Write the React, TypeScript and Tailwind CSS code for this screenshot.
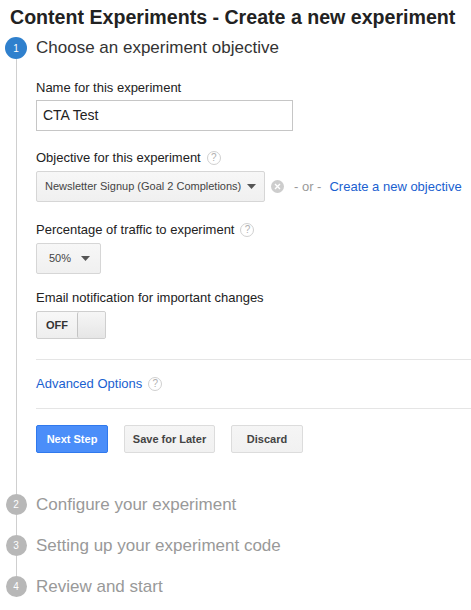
import React from "react";

const font = { fontFamily: '"Liberation Sans", Arial, sans-serif' };

function Help() {
  return (
    <span className="inline-flex h-[14px] w-[14px] items-center justify-center rounded-full border border-[#d0d0d0] text-[10px] leading-none text-[#b0b0b0]">
      ?
    </span>
  );
}

function Caret() {
  return (
    <svg width="9" height="5" viewBox="0 0 9 5" className="shrink-0">
      <path d="M0 0h9L4.5 5z" fill="#555" />
    </svg>
  );
}

function StepMarker({ n, active, line }: { n: number; active?: boolean; line: boolean }) {
  return (
    <div className="flex w-[22px] shrink-0 flex-col items-center">
      <div
        className={
          "flex shrink-0 items-center justify-center rounded-full text-[10px] text-white " +
          (active ? "h-[22px] w-[22px] bg-[#2f80cd]" : "h-[21px] w-[21px] bg-[#b8b8b8]")
        }
      >
        {n}
      </div>
      {line && <div className="w-px flex-1 bg-[#cfcfcf]" />}
    </div>
  );
}

function Label({ children }: { children: React.ReactNode }) {
  return <div className="flex items-center gap-[6px] text-[13px] leading-4 text-[#222]">{children}</div>;
}

export default function App() {
  return (
    <div className="min-h-[610px] w-[471px] overflow-hidden bg-white" style={font}>
      <h1 className="pl-[10px] pt-[5px] text-[19.6px] font-bold leading-6 text-[#222]">
        Content Experiments - Create a new experiment
      </h1>

      <div className="mt-[8px] pl-[5px]">
        {/* Step 1 */}
        <div className="flex gap-[9px]">
          <StepMarker n={1} active line />
          <div className="flex-1 pb-[41px]">
            <div className="text-[17px] leading-[22px] text-[#333]">Choose an experiment objective</div>

            <div className="mt-[21px]">
              <Label>Name for this experiment</Label>
              <div className="mt-[4px] flex h-[31px] w-[257px] items-center border border-[#c6c6c6] px-[6px] text-[14px] text-[#222]">
                CTA Test
              </div>
            </div>

            <div className="mt-[19px]">
              <Label>
                Objective for this experiment <Help />
              </Label>
              <div className="mt-[5px] flex items-center">
                <div className="flex h-[31px] w-[229px] items-center justify-between rounded-[2px] border border-[#d6d6d6] bg-gradient-to-b from-[#f7f7f7] to-[#f0f0f0] pl-[8px] pr-[8px] text-[11px] text-[#444]">
                  <span>Newsletter Signup (Goal 2 Completions)</span>
                  <Caret />
                </div>
                <span className="ml-[6px] inline-flex h-[13px] w-[13px] items-center justify-center rounded-full bg-[#cdcdcd]">
                  <svg width="7" height="7" viewBox="0 0 7 7">
                    <path d="M1 1l5 5M6 1l-5 5" stroke="#fff" strokeWidth="1.4" />
                  </svg>
                </span>
                <span className="ml-[10px] text-[13px] text-[#999]">- or -</span>
                <span className="ml-[8px] text-[13px] text-[#1a5fd0]">Create a new objective</span>
              </div>
            </div>

            <div className="mt-[20px]">
              <Label>
                Percentage of traffic to experiment <Help />
              </Label>
              <div className="mt-[5px] flex h-[31px] w-[65px] items-center justify-between rounded-[2px] border border-[#d6d6d6] bg-gradient-to-b from-[#f7f7f7] to-[#f0f0f0] pl-[12px] pr-[10px] text-[11px] text-[#444]">
                <span>50%</span>
                <Caret />
              </div>
            </div>

            <div className="mt-[16px]">
              <Label>Email notification for important changes</Label>
              <div className="mt-[5px] flex h-[28px] w-[70px] overflow-hidden rounded-[2px] border border-[#cfcfcf] bg-gradient-to-b from-[#f8f8f8] to-[#eeeeee]">
                <div className="flex w-[40px] items-center justify-center text-[11px] font-bold text-[#333]">OFF</div>
                <div className="flex-1 rounded-[2px] border-l border-[#c4c4c4] bg-gradient-to-b from-[#f6f6f6] to-[#e6e6e6]" />
              </div>
            </div>

            <div className="mt-[20px] border-t border-[#e5e5e5]" />

            <div className="mt-[16px] flex items-center gap-[6px] text-[13px] leading-4 text-[#1a5fd0]">
              Advanced Options <Help />
            </div>

            <div className="mt-[16px] border-t border-[#e5e5e5]" />

            <div className="mt-[16px] flex gap-[16px] text-[11px] font-bold">
              <button className="h-[28px] w-[72px] rounded-[2px] border border-[#3079ed] bg-[#4b8ef9] text-white">
                Next Step
              </button>
              <button className="h-[28px] w-[91px] rounded-[2px] border border-[#dcdcdc] bg-gradient-to-b from-[#f5f5f5] to-[#f1f1f1] text-[#444]">
                Save for Later
              </button>
              <button className="h-[28px] w-[72px] rounded-[2px] border border-[#dcdcdc] bg-gradient-to-b from-[#f5f5f5] to-[#f1f1f1] text-[#444]">
                Discard
              </button>
            </div>
          </div>
        </div>

        {/* Steps 2-4 */}
        {[
          { n: 2, text: "Configure your experiment" },
          { n: 3, text: "Setting up your experiment code" },
          { n: 4, text: "Review and start" },
        ].map((s) => (
          <div key={s.n} className="flex gap-[9px]">
            <StepMarker n={s.n} line={s.n !== 4} />
            <div className={"flex-1 text-[17px] leading-[21px] text-[#999] " + (s.n === 4 ? "" : "pb-[20px]")}>
              {s.text}
            </div>
          </div>
        ))}
      </div>
    </div>
  );
}
